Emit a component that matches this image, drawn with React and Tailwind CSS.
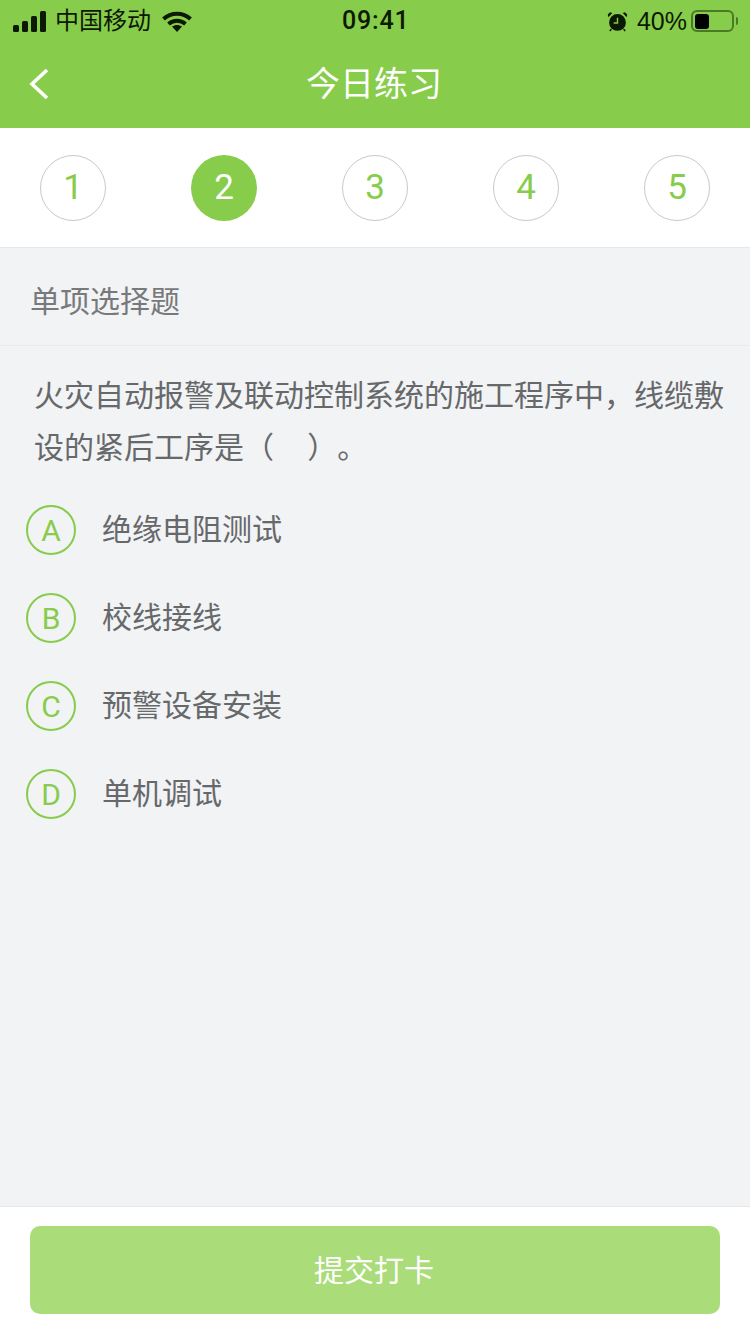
const CJK = "font-['Liberation_Sans','Noto_Sans_CJK_SC',sans-serif]";

const STEPS = [1, 2, 3, 4, 5];
const OPTIONS = [
  { key: "A", text: "绝缘电阻测试" },
  { key: "B", text: "校线接线" },
  { key: "C", text: "预警设备安装" },
  { key: "D", text: "单机调试" },
];

function StatusBar() {
  return (
    <div className="relative flex h-10 items-center justify-between pl-[13px] pr-[12px] pt-[2px] text-[#0c1a04]">
      <div className="flex items-center">
        <svg width="34" height="21" viewBox="0 0 34 21" fill="currentColor">
          <rect x="0" y="14" width="6" height="7" rx="1.5" />
          <rect x="9" y="10" width="6" height="11" rx="1.5" />
          <rect x="18" y="5" width="6" height="16" rx="1.5" />
          <rect x="27" y="0" width="6" height="21" rx="1.5" />
        </svg>
        <span className="ml-[8px] text-[24px] leading-none">中国移动</span>
        <svg className="ml-[11px]" width="30" height="21" viewBox="0 0 30 21" fill="none" stroke="currentColor" strokeWidth="4">
          <path d="M1.5 8C9 1 21 1 28.5 8" />
          <path d="M6.5 13c5-4.3 12-4.3 17 0" />
          <path d="M15 21l-5-5.4c3-2.2 7-2.2 10 0z" fill="currentColor" stroke="none" />
        </svg>
      </div>
      <span className="absolute left-[342px] top-[6px] font-['Roboto',sans-serif] text-[25px] font-medium leading-[30px] tracking-[0.8px]">09:41</span>
      <div className="flex items-center">
        <svg width="21" height="21" viewBox="0 0 22 22" fill="currentColor">
          <circle cx="11" cy="12" r="8.8" />
          <path d="M1.5 6.5 5.5 2.2 3.2 1.2.8 3.6zM20.5 6.5l-4-4.3 2.3-1 2.4 2.4z" />
          <path d="M11 7v5.5H7" fill="none" stroke="#88cc4b" strokeWidth="1.5" />
          <path d="M4.5 19 3 21M17.5 19l1.5 2" stroke="currentColor" strokeWidth="1.6" />
        </svg>
        <span className="ml-[9px] font-['Liberation_Sans',sans-serif] text-[25px] leading-none">40%</span>
        <div className="ml-[4px] flex h-[22px] w-[43px] items-center rounded-[6px] border-2 border-[#4a7a26] pl-[2px]">
          <div className="h-[15px] w-[14px] rounded-[3px] bg-black" />
        </div>
        <div className="ml-[2px] h-[8px] w-[2px] rounded-r bg-[#4a7a26]" />
      </div>
    </div>
  );
}

export default function App() {
  return (
    <div className={`flex h-[1334px] w-[750px] flex-col overflow-hidden bg-[#f1f3f5] ${CJK}`}>
      <div className="bg-[#88cc4b]">
        <StatusBar />
        <div className="relative flex h-[88px] items-center justify-center pr-[2px]">
          <svg className="absolute left-[28px] top-[28px]" width="22" height="32" viewBox="0 0 22 32" fill="none" stroke="#fff" strokeWidth="3.6">
            <path d="M19 2 4 16l15 14" />
          </svg>
          <h1 className="text-[34px] font-normal leading-none text-white">今日练习</h1>
        </div>
      </div>

      <div className="flex h-[120px] items-start justify-between border-b border-[#e6e7e9] bg-white px-10 pt-[27px]">
        {STEPS.map((n) =>
          n === 2 ? (
            <div key={n} className="flex h-[66px] w-[66px] items-center justify-center rounded-full bg-[#88cc4b] font-['Roboto',sans-serif] text-[35px] text-white">
              {n}
            </div>
          ) : (
            <div key={n} className="flex h-[66px] w-[66px] items-center justify-center rounded-full border border-[#c9c9c9] font-['Roboto',sans-serif] text-[35px] text-[#88cc4b]">
              {n}
            </div>
          )
        )}
      </div>

      <div className="flex h-[98px] items-center border-b border-[#e9ebed] pl-[30px] pt-[10px] text-[30px] text-[#77797b]">
        单项选择题
      </div>

      <div className="flex-1">
        <p className="pl-[34px] pr-[24px] pt-6 text-[30px] leading-[52px] text-[#66686a] [text-spacing-trim:space-all]">
          火灾自动报警及联动控制系统的施工程序中，线缆敷设的紧后工序是（&nbsp;&nbsp;&nbsp;&nbsp;）。
        </p>
        <div className="mt-[31px] flex flex-col gap-[38px] pl-[26px]">
          {OPTIONS.map((o) => (
            <div key={o.key} className="flex items-center">
              <div className="flex h-[50px] w-[50px] items-center justify-center rounded-full border-2 border-[#88cc4b] font-['Roboto',sans-serif] text-[30px] text-[#88cc4b]">
                {o.key}
              </div>
              <span className="ml-[26px] text-[30px] leading-none text-[#66686a]">{o.text}</span>
            </div>
          ))}
        </div>
      </div>

      <div className="h-[128px] border-t border-[#e6e7e9] bg-white px-[30px] pt-[19px]">
        <button type="button" className="flex h-[88px] w-full items-center justify-center rounded-[10px] bg-[#aadc7a] pr-[2px] text-[30px] text-white">
          提交打卡
        </button>
      </div>
    </div>
  );
}
